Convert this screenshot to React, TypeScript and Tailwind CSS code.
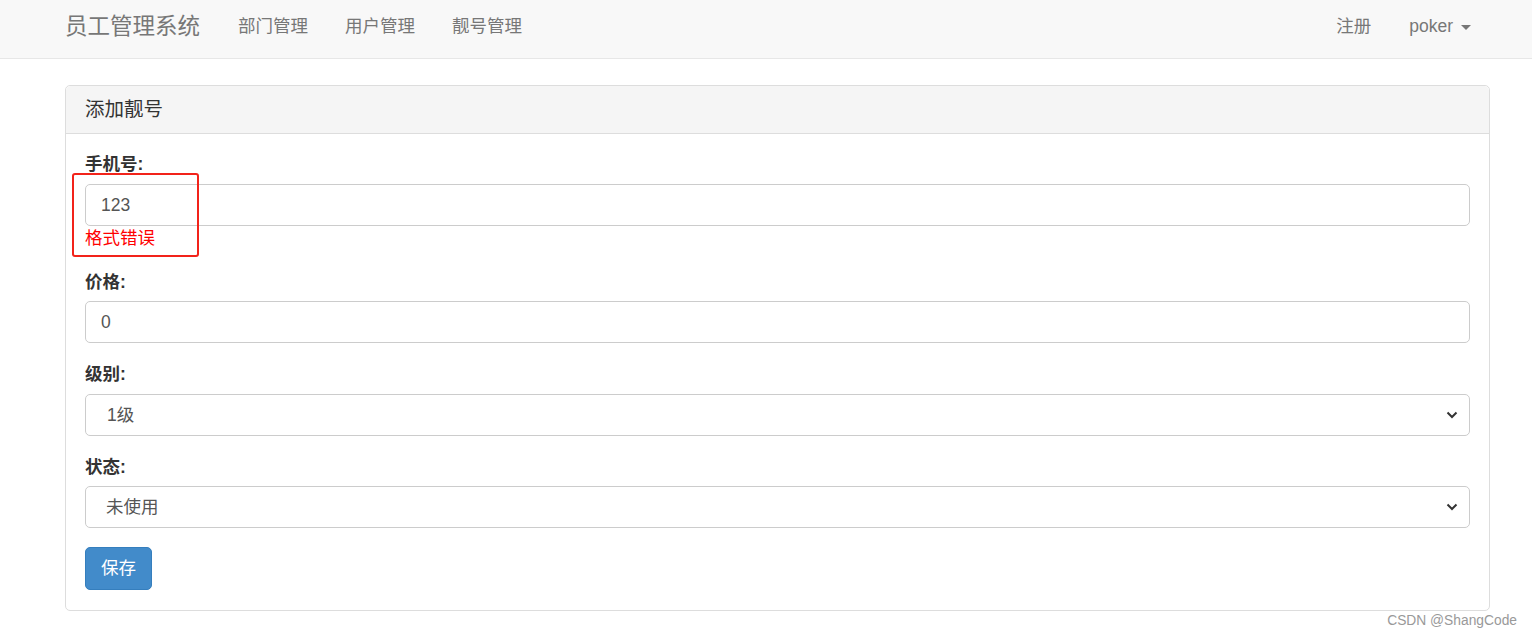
import React, { useState } from 'react';

const font = { fontFamily: '"Liberation Sans", "Noto Sans CJK SC", sans-serif' };

const Chevron = () => (
  <svg width="12" height="8" viewBox="0 0 12 8" className="pointer-events-none absolute right-[12px] top-1/2 -translate-y-1/2">
    <path d="M1.5 1.5 L6 6 L10.5 1.5" fill="none" stroke="#333" strokeWidth="2" />
  </svg>
);

const App = () => {
  const [mobile, setMobile] = useState('123');
  const [price, setPrice] = useState('0');
  const [level, setLevel] = useState('1');
  const [status, setStatus] = useState('1');

  return (
    <div className="relative min-h-[638px] bg-white text-[17.5px] text-[#333]" style={font}>
      {/* navbar */}
      <div className="h-[59px] border-b border-[#e7e7e7] bg-[#f8f8f8]">
        <div className="flex h-[58px] items-center pb-[5px] pl-[65px] pr-[61px]">
          <span className="mr-[38px] text-[22.5px] text-[#777]">员工管理系统</span>
          <div className="flex gap-[37px] text-[#777]">
            <span>部门管理</span>
            <span>用户管理</span>
            <span>靓号管理</span>
          </div>
          <div className="ml-auto flex items-center gap-[38px] text-[#777]">
            <span>注册</span>
            <span className="flex items-center">
              poker
              <span className="ml-[8px] mt-[2px] h-0 w-0 border-x-[5px] border-t-[5px] border-x-transparent border-t-[#777]" />
            </span>
          </div>
        </div>
      </div>

      {/* panel */}
      <div className="ml-[65px] mt-[26px] w-[1425px] rounded-[5px] border border-[#ddd]">
        <div className="flex h-[48px] items-center rounded-t-[5px] border-b border-[#ddd] bg-[#f5f5f5] px-[19px] text-[19.5px] text-[#333]">
          添加靓号
        </div>
        <div className="relative px-[19px] pb-[20px] pt-[18px]">
          <div className="mb-[19px]">
            <label className="mb-[7px] block font-bold leading-[25px]">手机号:</label>
            <input
              value={mobile}
              onChange={(e) => setMobile(e.target.value)}
              className="block h-[42px] w-full rounded-[5px] border border-[#ccc] px-[15px] text-[#555] outline-none"
            />
            <span className="block leading-[25px] text-[#f00]">格式错误</span>
          </div>
          <div className="absolute left-[6px] top-[39px] h-[84px] w-[127px] rounded-[3px] border-2 border-[#f2231a]" />

          <div className="mb-[19px]">
            <label className="mb-[6px] block font-bold leading-[25px]">价格:</label>
            <input
              value={price}
              onChange={(e) => setPrice(e.target.value)}
              className="block h-[42px] w-full rounded-[5px] border border-[#ccc] px-[15px] text-[#555] outline-none"
            />
          </div>

          <div className="mb-[19px]">
            <label className="mb-[7px] block font-bold leading-[25px]">级别:</label>
            <div className="relative">
              <select
                value={level}
                onChange={(e) => setLevel(e.target.value)}
                className="block h-[42px] w-full appearance-none rounded-[5px] border border-[#ccc] bg-white pl-[21px] text-[#555] outline-none"
              >
                <option value="1">1级</option>
                <option value="2">2级</option>
                <option value="3">3级</option>
                <option value="4">4级</option>
              </select>
              <Chevron />
            </div>
          </div>

          <div className="mb-[19px]">
            <label className="mb-[6px] block font-bold leading-[25px]">状态:</label>
            <div className="relative">
              <select
                value={status}
                onChange={(e) => setStatus(e.target.value)}
                className="block h-[42px] w-full appearance-none rounded-[5px] border border-[#ccc] bg-white pl-[20px] text-[#555] outline-none"
              >
                <option value="1">未使用</option>
                <option value="2">已使用</option>
              </select>
              <Chevron />
            </div>
          </div>

          <button className="h-[43px] w-[67px] rounded-[5px] border border-[#357ebd] bg-[#428bca] text-white">
            保存
          </button>
        </div>
      </div>

      <span className="absolute bottom-[6px] right-[15px] text-[13.8px] text-[#999]">CSDN @ShangCode</span>
    </div>
  );
};

export default App;
